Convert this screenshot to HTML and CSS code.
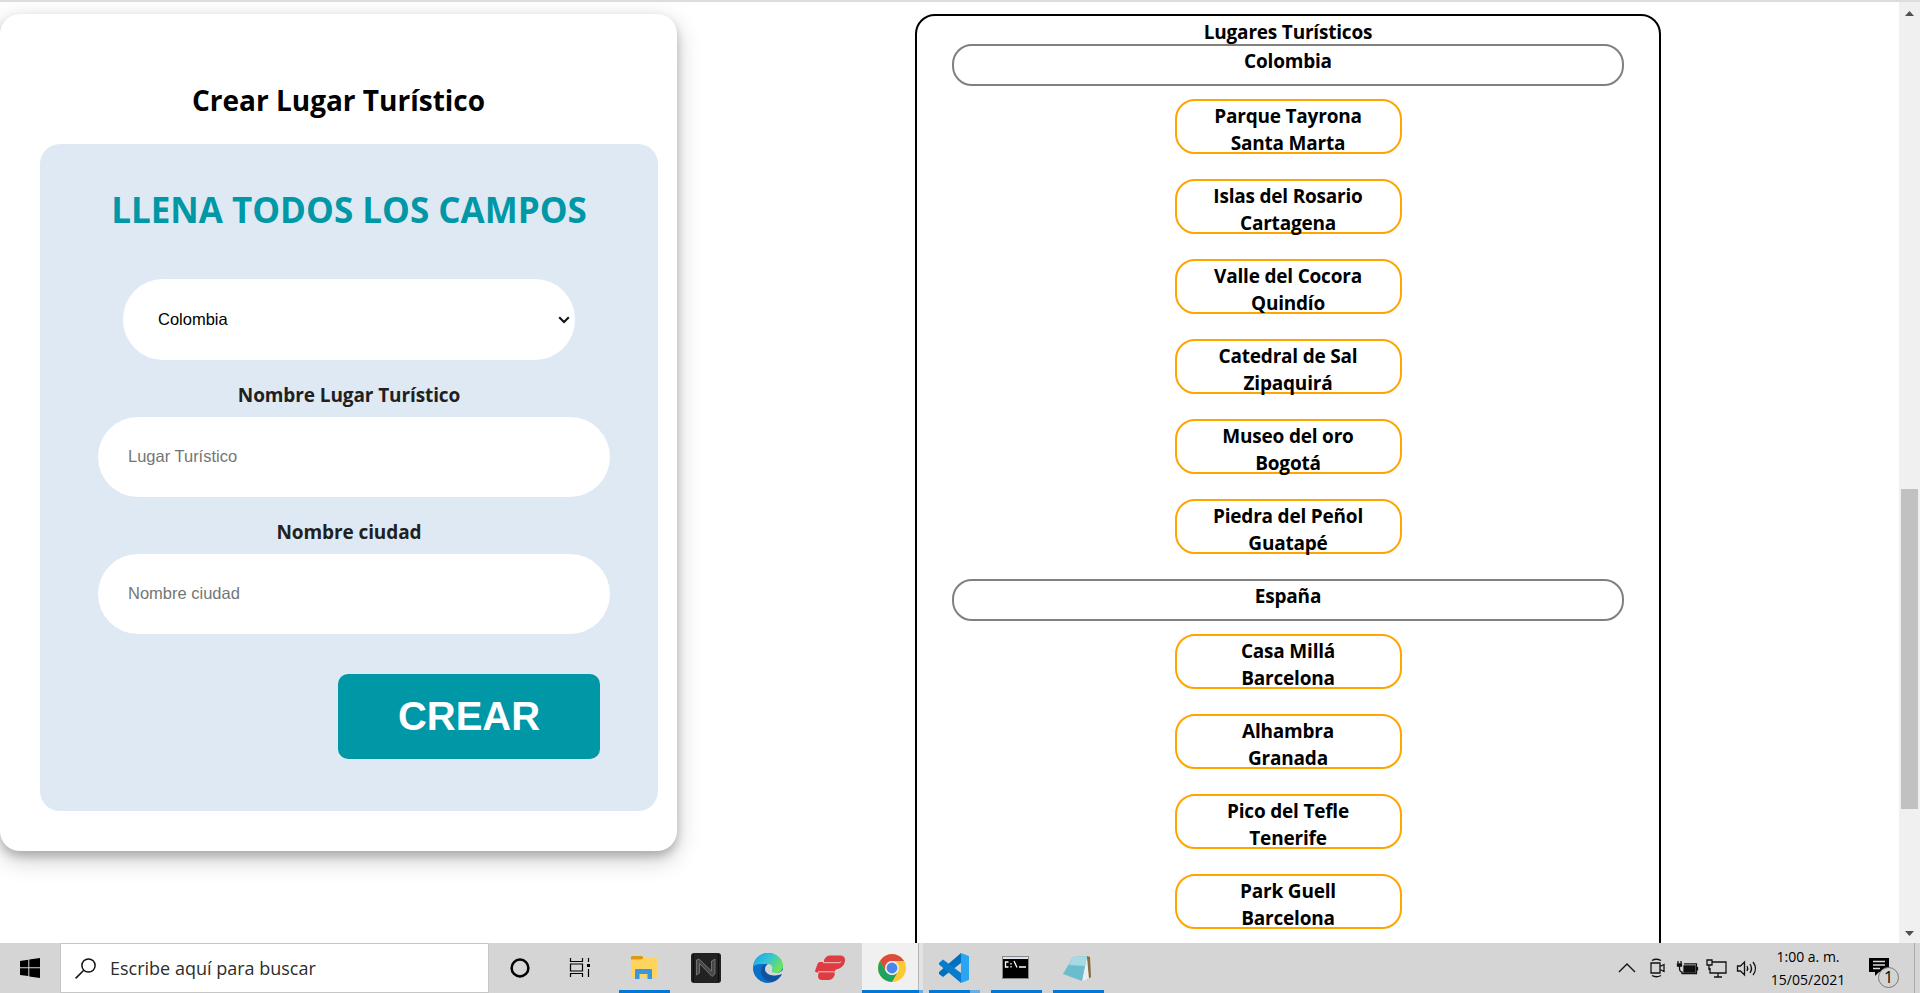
FILE: index.html
```html
<!DOCTYPE html>
<html lang="es">
<head>
<meta charset="utf-8">
<title>Lugares Turísticos</title>
<link rel="stylesheet" href="styles.css">
</head>
<body>
<div class="viewport">
  <main class="page">
    <section class="card">
      <h2 class="card-title">Crear Lugar Turístico</h2>
      <form class="form">
        <h1 class="form-title">LLENA TODOS LOS CAMPOS</h1>
        <div class="select"><span>Colombia</span><svg width="12" height="8" viewBox="0 0 12 8"><path d="M1.200 1.200 6 6l4.800-4.800" fill="none" stroke="#111" stroke-width="2"/></svg></div>
        <label class="label" for="lugar">Nombre Lugar Turístico</label>
        <input class="input" id="lugar" placeholder="Lugar Turístico">
        <label class="label" for="ciudad">Nombre ciudad</label>
        <input class="input" id="ciudad" placeholder="Nombre ciudad">
        <button class="button" type="button">CREAR</button>
      </form>
    </section>
    <section class="places">
      <h3 class="places-title">Lugares Turísticos</h3>
      <div class="country">Colombia</div>
      <div class="place">Parque Tayrona<br>Santa Marta</div>
      <div class="place">Islas del Rosario<br>Cartagena</div>
      <div class="place">Valle del Cocora<br>Quindío</div>
      <div class="place">Catedral de Sal<br>Zipaquirá</div>
      <div class="place">Museo del oro<br>Bogotá</div>
      <div class="place">Piedra del Peñol<br>Guatapé</div>
      <div class="country">España</div>
      <div class="place">Casa Millá<br>Barcelona</div>
      <div class="place">Alhambra<br>Granada</div>
      <div class="place">Pico del Tefle<br>Tenerife</div>
      <div class="place">Park Guell<br>Barcelona</div>
    </section>
  </main>
  <aside class="scrollbar">
    <svg width="9" height="5"><path d="M0 5h9L4.500 0z" fill="#505050"/></svg>
    <div class="thumb"></div>
    <svg width="9" height="5"><path d="M0 0h9L4.500 5z" fill="#505050"/></svg>
  </aside>
</div>
<footer class="taskbar">
  <div class="start"><svg width="20" height="20" viewBox="0 0 20 20"><path d="M0 3l8.300-1.200V9.200H0zM9.300 1.600 20 0v9.200H9.300zM0 10.200h8.300v7.800L0 17zM9.300 10.200H20V20L9.300 18.400z"/></svg></div>
  <div class="search"><svg width="21" height="21" viewBox="0 0 21 21" fill="none" stroke="#111" stroke-width="1.500"><circle cx="13.500" cy="7.500" r="6.600"/><path d="M8.800 12.200.6 20.400"/></svg><span>Escribe aquí para buscar</span></div>
  <div class="apps">
    <div class="app"><svg width="32" height="32" viewBox="0 0 32 32"><circle cx="16" cy="16" r="8.400" fill="none" stroke="#000" stroke-width="2.500"/></svg></div>
    <div class="app"><svg width="32" height="32" viewBox="0 0 32 32" fill="none" stroke="#000" stroke-width="1.200"><path d="M4.500 6v3.500h12V6M4.500 25v-3.500h12V25M4.500 12h12v7h-12zM22.500 6v4M22.500 17v8"/><path d="M21 12h3v3h-3z" fill="#000" stroke="none"/></svg></div>
    <div class="app open"><svg width="32" height="32" viewBox="0 0 32 32"><path d="M3 4.500h11l2 1.500H28q1 0 1 1V26H3z" fill="#ffd45e"/><path d="M3 5q0-1 1-1h10l1 1v1.500l-2 1H3z" fill="#dc9a14"/><path d="M7 27V18q0-1 1-1h15q1 0 1 1v9h-4.500v-5h-8v5z" fill="#3a96dd"/></svg></div>
    <div class="app"><svg width="32" height="32" viewBox="0 0 32 32"><rect x="1" y="1" width="30" height="30" rx="3" fill="#222"/><path d="M3.500 2v28M28.500 2v28" stroke="#0c0c0c"/><path d="M6.500 23V8l2.500-1 12.500 12V9l3.500-2v15l-3 2.500-12.500-13V21z" fill="#484848" stroke="#888" stroke-width=".7"/></svg></div>
    <div class="app"><svg width="32" height="32" viewBox="0 0 32 32"><defs><linearGradient id="edgeTop" x1="0" x2="1" y1="0" y2=".5"><stop stop-color="#16a5e2"/><stop offset=".5" stop-color="#34c1db"/><stop offset="1" stop-color="#6be35b"/></linearGradient></defs><circle cx="16" cy="16" r="15" fill="#0c6fc8"/><path d="M1 15C2 6 9 1 16 1c9 0 15 6 15 13 0 4-3 7-7 7-3 0-5-1-4-3 1-3-2-6-6-6-6 0-11 0-13 3z" fill="url(#edgeTop)"/><path d="M10 15c-3 7 2 14 9 15 5-1 9-4 11-8-8 4-16 2-17-5 0-2 1-4 3-5-3 0-5 1-6 3z" fill="#10529e"/><path d="M13 17c0-3 2-5 4-5 3 1 4 3 3 6-1 2 2 3 4 3 3 0 5-1 7-3 1 1 1 3-1 4-8 3-17 1-17-5z" fill="#d6d6d6"/></svg></div>
    <div class="app"><svg width="32" height="32" viewBox="0 0 32 32"><path d="M10 8q2-4.500 6-4.500h10q5 0 5 4.500 0 5-4 7.500-2 1.500-5 2-1 1-1.500 2-.5 2 .5 2.500-1.500 5.500-6 6H8q-4 0-4-4 0-2 1-3.500-4 0-4-1.500l2.500-7Q4 10 6 10h4z" fill="#df3c42"/><path d="M9 10.700h16q2 0 2-1.200M4 19.800h16" fill="none" stroke="#eac8ca" stroke-width="1"/></svg></div>
    <div class="app open active"><svg width="32" height="32" viewBox="0 0 32 32"><circle cx="16" cy="16" r="14" fill="#fbc934"/><path d="M3.900 9A14 14 0 0 1 28.100 9H16a7 7 0 0 0-6 10.500z" fill="#dc4b3e"/><path d="M3.900 9A14 14 0 0 0 16 30l6-10.500a7 7 0 0 1-12 0z" fill="#1da462"/><circle cx="16" cy="16" r="7" fill="#eee"/><circle cx="16" cy="16" r="5.400" fill="#4a86ee"/></svg></div>
    <div class="app open multi"><svg width="32" height="32" viewBox="0 0 32 32"><path d="M23 1v10L5 25l-4-3v-2z" fill="#0070bd"/><path d="M1 11l4-3.500L23 21v10L1 12.500z" fill="#087ccc"/><path d="M23 1l8 3v24l-8 3z" fill="#2aa5f3"/></svg></div>
    <div class="app open"><svg width="32" height="32" viewBox="0 0 32 32"><rect x="2.500" y="4.500" width="26" height="22" fill="#000" stroke="#888"/><path d="M3 5h25v2H3z" fill="#dde3ea"/><path d="M8.500 10H5.500v5h3M11 11v1.500M11 14v1.500M14 9l3 6.500M19 15h7" stroke="#fff" fill="none" stroke-width="1.300"/></svg></div>
    <div class="app open"><svg width="32" height="32" viewBox="0 0 32 32"><path d="M25 4l3 1 1 20-4 3z" fill="#8b6a3e"/><path d="M25 5l2 22-7 2z" fill="#e9eef0"/><path d="M11 5l14-1-5 25L1 22z" fill="#6bbccd"/><path d="M11 5l14-1-2 10-16-1z" fill="#a6dae2"/></svg></div>
  </div>
  <div class="tray">
    <svg width="150" height="28" viewBox="0 0 150 28" fill="none" stroke="#111" stroke-width="1.300"><path d="M1 18l8-8 8 8M33 9h9v10h-9zM42 12.500l4-2v7l-4-2M34 6.500q4-2.500 9 0M34 21.500q4 2.500 9 0"/><path d="M66 12h11v6H66z" fill="#111"/><path d="M66 9.800h12.500v9.700H64v-2M79.500 13v3.500M60 7v2.500M63 7v2.500M61.500 12v3q0 2.500 2 3"/><path d="M59.500 10h4v2h-4z" fill="#111"/><path d="M94 8h14v11H92v-5M100 19v4M96 23h8M89 6h5v5h-5zM91 11v5M119.500 12h3l4-4v13l-4-4h-3zM129 12q1.500 2.500 0 5M132 10q3 4.500 0 9M135 8q5 6.500 0 13"/></svg>
    <div class="clock"><div>1:00 a. m.</div><div>15/05/2021</div></div>
    <svg class="notice" width="34" height="34" viewBox="0 0 34 34"><path d="M2 3h20v14H12l-4 4v-4H2z" fill="#000"/><path d="M6 6.500h12M6 10h12M6 13.500h7" stroke="#ddd" stroke-width="1.300"/><circle cx="21.500" cy="22.500" r="10" fill="#d3d3d3" stroke="#777"/><text class="badge" x="21.500" y="28" text-anchor="middle">1</text></svg>
    <div class="peek"></div>
  </div>
</footer>
</body>
</html>
```
FILE: styles.css
```css
* { box-sizing: border-box; }
body { margin: 0; height: 993px; overflow: hidden; display: flex; flex-direction: column; background: #fff; color: #000; font-family: "Open Sans", "Noto Sans", sans-serif; }
.viewport { height: 943px; flex: none; display: flex; border-top: 2px solid #dcdce2; overflow: hidden; }
.page { flex: 1; display: flex; align-items: flex-start; padding-top: 12px; }
.card { width: 677px; height: 837px; border-radius: 20px; padding: 61px 19px 40px 40px; box-shadow: 0 5px 10px rgba(0,0,0,.2), 0 8px 24px rgba(0,0,0,.22); }
.card-title { margin: 0 21px 0 0; height: 69px; font-size: 28px; line-height: 50px; text-align: center; }
.form { height: 667px; border-radius: 20px; background: #dfe9f3; display: flex; flex-direction: column; align-items: center; padding: 41px 48px 0; }
.form-title { margin: 0; height: 94px; color: #0097a7; font-size: 35px; line-height: 50px; white-space: nowrap; }
.select { width: 452px; height: 81px; border-radius: 40px; background: #fff; display: flex; align-items: center; justify-content: space-between; padding: 0 5px 0 35px; font: 16.500px "Liberation Sans", Arial, sans-serif; }
.label { height: 57px; padding-top: 20px; line-height: 30px; font-size: 19px; letter-spacing: -.1px; font-weight: 700; color: #212121; }
.input { width: 512px; height: 80px; flex: none; margin-left: 10px; border: 0; border-radius: 40px; padding: 0 30px 2px; background: #fff; font: 16.500px "Liberation Sans", Arial, sans-serif; }
.input::placeholder { color: #757575; }
.button { width: 262px; height: 85px; margin: 40px 10px 0 0; align-self: flex-end; border: 0; border-radius: 10px; background: #0097a7; color: #fff; font: bold 40px "Liberation Sans", Arial, sans-serif; }
.places { width: 746px; height: 1200px; margin-left: 238px; border: 2px solid #000; border-radius: 20px; display: flex; flex-direction: column; align-items: center; font-size: 19px; letter-spacing: -.2px; font-weight: 700; line-height: 27px; text-align: center; }
.places-title { margin: 0; padding-top: 3px; height: 28px; font-size: 19px; line-height: 27px; }
.country { width: 672px; height: 42px; flex: none; margin-bottom: 13px; padding-top: 2px; border: 2px solid gray; border-radius: 20px; }
.place { width: 227px; height: 55px; flex: none; margin-bottom: 25px; padding-top: 2px; border: 2px solid orange; border-radius: 20px; }
.scrollbar { width: 21px; height: 941px; background: #f0f0f0; display: flex; flex-direction: column; align-items: center; padding: 9px 2px 7px; }
.thumb { width: 17px; height: 320px; margin: 473px 0 auto; background: #c1c1c1; }
.taskbar { height: 50px; display: flex; background: #d5d5d5; }
.start { width: 60px; display: flex; align-items: center; justify-content: center; }
.search { width: 429px; border: 1px solid #c6c6c6; background: #fff; display: flex; align-items: center; gap: 14px; padding-left: 14px; font-size: 18px; color: #2d2d2d; }
.apps { display: flex; }
.app { width: 62px; display: flex; align-items: center; justify-content: center; }
.open { background: linear-gradient(#0078d7, #0078d7) 6px 100% / 51px 3px no-repeat; }
.active { background: linear-gradient(90deg, #0078d7 57px, #66aee8 57px) 1px 100% / 61px 3px no-repeat, linear-gradient(90deg, transparent 1px, #f0f0f0 1px 57px, #b4b4b4 57px 58px, #e3e3e3 58px); }
.multi { background: linear-gradient(90deg, #0078d7 41px, #66aee8 41px) 6px 100% / 51px 3px no-repeat; }
.tray { margin-left: auto; display: flex; align-items: center; }
.clock { width: 80px; font-size: 14px; line-height: 23px; text-align: center; }
.notice { margin: 8px 13px 0 19px; }
.badge { font-size: 16px; }
.peek { width: 6px; height: 50px; border-left: 1px solid #aaa; }
```
